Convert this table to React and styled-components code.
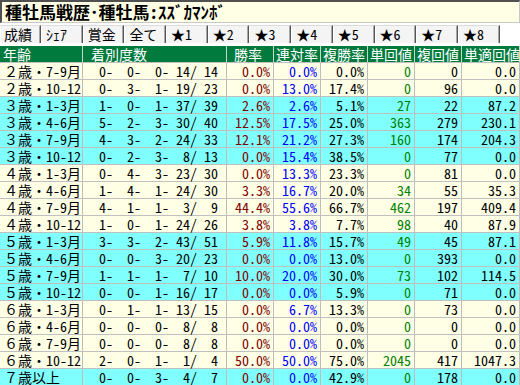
import styled, { createGlobalStyle } from "styled-components";

const GlobalStyle = createGlobalStyle`
  body {
    margin: 0;
    background: #fff;
  }
  * {
    box-sizing: border-box;
  }
`;

const Page = styled.div`
  width: 520px;
  height: 385px;
  overflow: hidden;
  font-family: "Noto Sans CJK JP", sans-serif;
  font-size: 14px;
  color: #000;
`;

const Half = styled.span`
  font-feature-settings: "hwid" 1;
`;

const TitleBox = styled.div`
  height: 23px;
  background: #ffffe6;
  border-top: 2px solid #505050;
  border-left: 2px solid #505050;
  border-bottom: 1px solid #c8c8c8;
  border-right: 1px solid #c8c8c8;
  padding-left: 3px;
  display: flex;
  align-items: center;
  font-size: 17px;
  font-weight: bold;
  line-height: 20px;
  white-space: nowrap;
`;

const TabStrip = styled.div`
  height: 23px;
  padding-top: 2px;
  display: flex;
  align-items: flex-start;
  background: #fff;
`;

const Tab = styled.div`
  flex: 0 0 ${(p) => (p.$first ? "41px" : "41.7px")};
  height: 18px;
  line-height: 17px;
  padding-left: ${(p) => (p.$first ? "4px" : "5px")};
  background: #f4f4f4;
  border-top: 1px solid #dcdcdc;
  border-right: 1px solid #555;
  box-shadow: inset -1px 0 #a8a8a8, inset 1px 0 #fff;
  white-space: nowrap;
`;

const COLS = "83px 144px 47px 47px 47px 47px 47px 58px";

const HeadRow = styled.div`
  display: grid;
  grid-template-columns: ${COLS};
  height: 17px;
  background: #007a3d;
  border-bottom: 1px solid #c0c0c0;
`;

const HeadCell = styled.div`
  color: #fff;
  line-height: 16px;
  padding-left: ${(p) => p.$pad || 2}px;
  border-right: 1px solid #c8d8c8;
  white-space: nowrap;
`;

const Row = styled.div`
  display: grid;
  grid-template-columns: ${COLS};
  height: 17px;
  background: ${(p) => (p.$cyan ? "#80ffff" : "#ffffe6")};
  border-bottom: 1px solid #c0c0c0;
`;

const Cell = styled.div`
  line-height: 16px;
  border-right: 1px solid #bdbdbd;
  white-space: nowrap;
  text-align: right;
  padding-right: 3px;
  color: ${(p) => p.$color || "#000"};
  font-feature-settings: "hwid" 1;
`;

const AgeCell = styled.div`
  line-height: 16px;
  border-right: 1px solid #bdbdbd;
  padding-left: 4px;
  white-space: nowrap;
`;

const Tally = styled.div`
  display: flex;
  line-height: 16px;
  border-right: 1px solid #bdbdbd;
  padding-left: 2px;
  font-feature-settings: "hwid" 1;
`;

const Field = styled.span`
  flex: 0 0 ${(p) => p.$w}px;
  text-align: right;
  white-space: pre;
`;

const tabs = [
  { label: "成績" },
  { label: "ｼｪｱ" },
  { label: "賞金" },
  { label: "全て" },
  ...[1, 2, 3, 4, 5, 6, 7, 8].map((n) => ({ star: n })),
];

const heads = [
  { label: "年齢", pad: 3 },
  { label: "着別度数", pad: 8 },
  { label: "勝率", pad: 7 },
  { label: "連対率" },
  { label: "複勝率" },
  { label: "単回値" },
  { label: "複回値" },
  { label: "単適回値" },
];

const rows = [
  { age: "２歳・", term: "7-9", tail: "月", r: [0, 0, 0, 14, 14], v: ["0.0%", "0.0%", "0.0%", "0", "0", "0.0"] },
  { age: "２歳・", term: "10-12", tail: "", r: [0, 3, 1, 19, 23], v: ["0.0%", "13.0%", "17.4%", "0", "96", "0.0"] },
  { age: "３歳・", term: "1-3", tail: "月", r: [1, 0, 1, 37, 39], v: ["2.6%", "2.6%", "5.1%", "27", "22", "87.2"], cyan: true },
  { age: "３歳・", term: "4-6", tail: "月", r: [5, 2, 3, 30, 40], v: ["12.5%", "17.5%", "25.0%", "363", "279", "230.1"], cyan: true },
  { age: "３歳・", term: "7-9", tail: "月", r: [4, 3, 2, 24, 33], v: ["12.1%", "21.2%", "27.3%", "160", "174", "204.3"], cyan: true },
  { age: "３歳・", term: "10-12", tail: "", r: [0, 2, 3, 8, 13], v: ["0.0%", "15.4%", "38.5%", "0", "77", "0.0"], cyan: true },
  { age: "４歳・", term: "1-3", tail: "月", r: [0, 4, 3, 23, 30], v: ["0.0%", "13.3%", "23.3%", "0", "81", "0.0"] },
  { age: "４歳・", term: "4-6", tail: "月", r: [1, 4, 1, 24, 30], v: ["3.3%", "16.7%", "20.0%", "34", "55", "35.3"] },
  { age: "４歳・", term: "7-9", tail: "月", r: [4, 1, 1, 3, 9], v: ["44.4%", "55.6%", "66.7%", "462", "197", "409.4"] },
  { age: "４歳・", term: "10-12", tail: "", r: [1, 0, 1, 24, 26], v: ["3.8%", "3.8%", "7.7%", "98", "40", "87.9"] },
  { age: "５歳・", term: "1-3", tail: "月", r: [3, 3, 2, 43, 51], v: ["5.9%", "11.8%", "15.7%", "49", "45", "87.1"], cyan: true },
  { age: "５歳・", term: "4-6", tail: "月", r: [0, 0, 3, 20, 23], v: ["0.0%", "0.0%", "13.0%", "0", "393", "0.0"], cyan: true },
  { age: "５歳・", term: "7-9", tail: "月", r: [1, 1, 1, 7, 10], v: ["10.0%", "20.0%", "30.0%", "73", "102", "114.5"], cyan: true },
  { age: "５歳・", term: "10-12", tail: "", r: [0, 0, 1, 16, 17], v: ["0.0%", "0.0%", "5.9%", "0", "71", "0.0"], cyan: true },
  { age: "６歳・", term: "1-3", tail: "月", r: [0, 1, 1, 13, 15], v: ["0.0%", "6.7%", "13.3%", "0", "73", "0.0"] },
  { age: "６歳・", term: "4-6", tail: "月", r: [0, 0, 0, 8, 8], v: ["0.0%", "0.0%", "0.0%", "0", "0", "0.0"] },
  { age: "６歳・", term: "7-9", tail: "月", r: [0, 0, 0, 8, 8], v: ["0.0%", "0.0%", "0.0%", "0", "0", "0.0"] },
  { age: "６歳・", term: "10-12", tail: "", r: [2, 0, 1, 1, 4], v: ["50.0%", "50.0%", "75.0%", "2045", "417", "1047.3"] },
  { age: "７歳以上", term: "", tail: "", r: [0, 0, 3, 4, 7], v: ["0.0%", "0.0%", "42.9%", "0", "178", "0.0"], cyan: true },
];

const valueColors = ["#800000", "#0000ff", "#000", "#008000", "#000", "#000"];

function TallyCell({ r }) {
  const [a, b, c, d, e] = r;
  return (
    <Tally>
      <Field $w={28}>{a}-</Field>
      <Field $w={28}>{b}-</Field>
      <Field $w={28}>{c}-</Field>
      <Field $w={28}>{d}/</Field>
      <Field $w={21}>{e}</Field>
    </Tally>
  );
}

export default function App() {
  return (
    <Page>
      <GlobalStyle />
      <TitleBox>
        種牡馬戦歴<Half>･</Half>種牡馬<Half>:ｽｽﾞｶﾏﾝﾎﾞ</Half>
      </TitleBox>
      <TabStrip>
        {tabs.map((t, i) => (
          <Tab key={i} $first={i === 0}>
            {t.star ? (
              <>
                ★<Half>{t.star}</Half>
              </>
            ) : (
              t.label
            )}
          </Tab>
        ))}
      </TabStrip>
      <HeadRow>
        {heads.map((h) => (
          <HeadCell key={h.label} $pad={h.pad}>
            {h.label}
          </HeadCell>
        ))}
      </HeadRow>
      {rows.map((row, i) => (
        <Row key={i} $cyan={row.cyan}>
          <AgeCell>
            {row.age}
            <Half>{row.term}</Half>
            {row.tail}
          </AgeCell>
          <TallyCell r={row.r} />
          {row.v.map((val, j) => (
            <Cell key={j} $color={valueColors[j]}>
              {val}
            </Cell>
          ))}
        </Row>
      ))}
    </Page>
  );
}
